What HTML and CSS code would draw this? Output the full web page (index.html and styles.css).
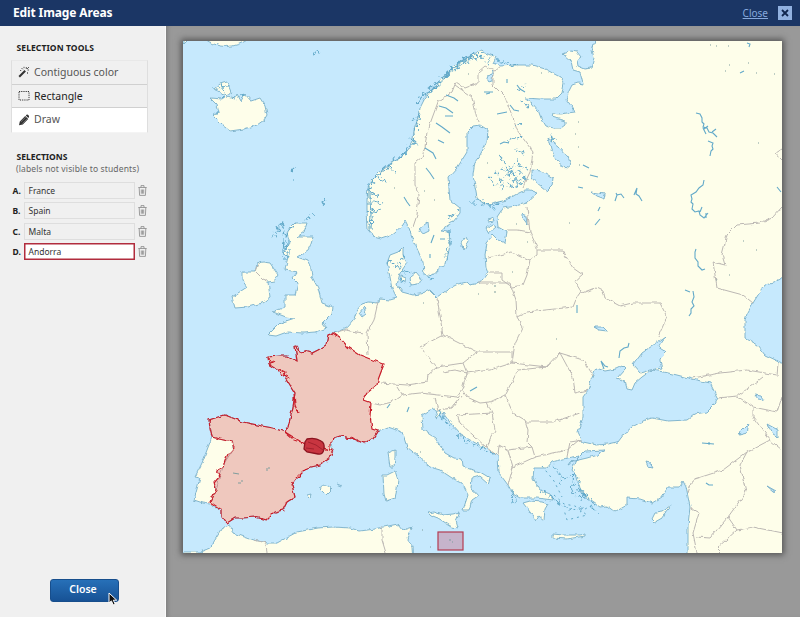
FILE: index.html
```
<!DOCTYPE html>
<html lang="en">
<head>
<meta charset="utf-8">
<title>Edit Image Areas</title>
<link rel="stylesheet" href="styles.css">
</head>
<body>
<header class="topbar">
  <h1>Edit Image Areas</h1>
  <a class="top-close" href="#">Close</a>
  <button class="x-button" aria-label="Close"><svg viewBox="0 0 14 14" width="14" height="14"><path d="M4 4l6 6M10 4l-6 6"/></svg></button>
</header>
<main class="workspace">
  <aside class="sidebar">
    <h2 class="tools-title">SELECTION TOOLS</h2>
    <div class="tools">
      <div class="tool"><svg viewBox="0 0 12 12" width="12" height="12"><path class="wand" d="M1.2 10.8L7.2 4.8"/><path class="thin" d="M8.3 1v2M11 4H9.5M3.5 2l1.3 1.3M6 .8v1.4M9.5 6.2v1.6M9 3l2-2M2 4.5h1.2"/></svg><span>Contiguous color</span></div>
      <div class="tool dark"><svg viewBox="0 0 12 12" width="12" height="12"><rect class="marquee" x="1" y="1.5" width="10" height="8.5"/></svg><span>Rectangle</span></div>
      <div class="tool active"><svg viewBox="0 0 12 12" width="12" height="12"><path class="solid" d="M1 11.3l.8-3.9L7.2 2l3 3-5.4 5.4zM7.8 1.4l.7-.6q1-.6 2 .4t.4 2l-.6.7z"/><path class="shine" d="M2.8 8l5-5M4.4 9.6l5-5"/></svg><span>Draw</span></div>
    </div>
    <h2 class="sel-title">SELECTIONS</h2>
    <p class="hint">(labels not visible to students)</p>
    <div class="rows">
      <div class="row"><b>A.</b><span class="field">France</span><svg class="trash" viewBox="0 0 9 11"><use href="#bin"/></svg></div>
      <div class="row"><b>B.</b><span class="field">Spain</span><svg class="trash" viewBox="0 0 9 11"><use href="#bin"/></svg></div>
      <div class="row"><b>C.</b><span class="field">Malta</span><svg class="trash" viewBox="0 0 9 11"><use href="#bin"/></svg></div>
      <div class="row"><b>D.</b><span class="field current">Andorra</span><svg class="trash" viewBox="0 0 9 11"><use href="#bin"/></svg></div>
    </div>
    <button class="close-button">Close<svg class="cursor" viewBox="0 0 10 14" width="10" height="14"><path d="M1 1v10l2.4-2.1 1.8 4 2-1-1.9-3.7h3.4z"/></svg></button>
  </aside>
  <section class="stage">
    <svg class="map" viewBox="183 41 599 512" width="599" height="512">
      <defs>
        <g id="bin"><path d="M.3 2.5h8.4M3 2.3V.6h3v1.7M1.2 2.8l.4 7.6h5.8l.4-7.6M3.3 4.5v4.2M4.5 4.5v4.2M5.7 4.5v4.2"/></g>
        <filter id="rough" filterUnits="userSpaceOnUse" x="170" y="30" width="625" height="535" color-interpolation-filters="sRGB">
          <feTurbulence type="fractalNoise" baseFrequency="0.2" numOctaves="1" seed="7" result="f"/>
          <feDisplacementMap in="SourceGraphic" in2="f" scale="4.5" xChannelSelector="R" yChannelSelector="G"/>
        </filter>
        <filter id="jag" filterUnits="userSpaceOnUse" x="170" y="30" width="625" height="535" color-interpolation-filters="sRGB">
          <feTurbulence type="fractalNoise" baseFrequency="0.28" numOctaves="1" seed="9" result="f"/>
          <feDisplacementMap in="SourceGraphic" in2="f" scale="11" xChannelSelector="R" yChannelSelector="G"/>
        </filter>
      </defs>
      <rect class="sea" x="183" y="41" width="599" height="512"/>
      <g filter="url(#rough)">
        <g class="land">
          <path d="M595 30L595 41 592 50 594 58 591 68 585 69 578 66 577 60 581 57 577 52 571 51 563 54 571 61 573 70 580 72 583 84 578 83 572 85 569 91 566 99 572 107 575 112 567 113 560 114 553 113 552 117 565 121 565 125 561 128 554 128 546 126 541 118 538 110 532 103 525 98 540 99 556 99 562 93 564 83 560 77 545 69 532 65 515 65 500 66 493 63 496 57 485 53 480 51 470 56 460 62 450 70 443 77 437 84 430 92 425 98 420 108 418 118 414 130 413 140 408 150 400 158 392 163 380 172 372 180 368 187 367 200 367 210 368 230 374 237 381 239 390 236 396 231 403 225 405 220 409 228 413 240 419 253 423 262 424 274 432 276 437 270 446 264 450 245 449 231 441 230 453 222 460 213 460 208 450 200 448 178 457 168 467 152 467 132 473 126 480 125 488 130 487 142 480 155 475 162 473 175 477 198 484 204 490 205 498 202 507 200 515 195 525 190 530 190 538 193 527 203 515 206 503 208 497 217 498 227 507 232 505 243 498 240 493 235 487 242 485 255 486 267 488 272 480 283 470 285 467 282 458 284 450 288 437 297 430 290 420 294 413 295 402 292 397 285 400 273 407 263 403 255 403 247 398 252 390 255 387 263 390 277 392 288 397 298 390 300 380 299 378 303 368 302 362 304 357 310 354 320 347 328 338 332 333 333 328 335 326 345 318 350 312 353 305 351 299 352 297 346 295 346 297 361 288 356 280 356 268 357 269 364 277 369 285 377 290 385 295 393 293 407 288 427 285 432 273 428 262 426 243 422 225 415 218 417 209 420 212 437 207 450 202 463 195 477 200 478 194 500 203 503 210 504 222 510 222 516 227 523 235 518 243 518 255 517 267 520 275 512 283 510 287 502 295 497 292 485 298 477 307 468 320 465 330 458 333 450 330 442 334 438 340 436 352 438 363 443 373 439 378 431 388 427 402 432 407 447 418 456 430 467 440 470 452 478 462 483 468 495 463 510 469 510 472 500 478 496 471 488 472 478 479 476 488 484 490 478 480 472 463 467 462 459 454 458 445 453 435 438 423 430 422 415 430 410 435 409 437 418 443 413 452 425 460 434 470 440 483 447 498 456 499 473 508 485 513 494 520 498 537 498 553 500 550 494 540 490 533 478 534 468 547 468 552 462 567 458 579 456 575 462 572 470 577 477 580 489 588 499 600 507 607 506 615 512 627 505 627 498 640 499 652 503 662 497 668 487 680 487 683 481 686 487 690 507 688 525 688 565H795V30z"/>
          <path d="M175 552L200 552 210 548 223 527 230 525 233 533 253 540 268 543 277 543 297 532 318 528 333 527 350 528 360 531 375 529 393 525 398 524 403 530 412 527 407 538 413 546 414 565H175z"/>
          <path d="M290 228L295 223 307 223 304 232 297 237 313 237 311 244 308 250 297 257 308 261 311 269 312 277 318 288 322 303 333 307 332 314 323 323 327 328 316 332 303 333 287 332 276 336 268 335 280 323 295 318 286 317 273 312 285 307 285 295 295 295 298 283 293 278 297 272 285 270 288 258 283 253 290 243 287 233z"/>
          <path d="M257 264L263 262 270 263 278 275 274 281 268 282 270 297 262 303 248 307 235 308 232 297 247 287 242 280 242 272 255 272z"/>
          <path d="M214 89L220 84 227 82 231 92 227 97 235 99 237 94 241 101 245 94 251 101 260 98 265 106 267 115 264 120 257 125 244 129 230 131 222 125 212 115 219 113 217 105 210 98 222 99 226 96 219 91z"/>
          <path d="M203 38Q227 55 250 38zM183 38h6l-6 6zM410 277l6-5 5 6-3 6-7 1zM401 276l5 2-1 5-4-2zM461 243l5-6 2 4-4 9zM486 228l6-4 4 3-7 6zM488 220l5-2 1 3-5 1zM388 453l7-3 0 8-1 9-4 0zM383 475l4 0 8-4 3 9-1 9-2 9-9 3-2-7zM428 513l6-1 9 3 10-1 7-2-4 9 2 7-6-1-14-9-8-3zM553 534l10 1 17 0 5-1 0 2-18 3-14-1zM652 519l3-6 7-1 10-7-7 9-3 4-7 4zM320 488l6-3 6 3-6 6zM337 484l5 2M307 495l4-1-1 4z"/>
          <path d="M523 503l7-2 12 1 6 2-3 5-1 11-5-4-3 5-6-9z"/>
        </g>
        <g class="water">
          <path d="M591 380L596 368 605 371 616 369 622 366 625 369 617 378 625 381 627 389 632 390 635 383 642 377 652 370 664 372 677 375 692 379 710 383 717 397 714 405 707 412 695 414 687 420 668 421 652 418 645 420 632 427 624 434 618 442 608 444 597 445 583 442 578 432 583 417 583 397 588 390z"/>
          <path d="M633 365L642 353 652 346 665 337 658 347 666 352 660 358 660 362 662 368 650 370 640 373z"/>
          <path d="M568 465l7-4 6-6 4-4 20-1-8 5-10 3-17 4z"/>
          <path d="M795 275L782 278 773 283 765 285 758 295 753 303 747 314 745 320 745 338 757 345 765 355 782 363H795z"/>
          <path d="M532 170l10 1 11 7-1 8-5 5-10-8-5-6zM548 138l10 8 10 11 3 8-5 4-10-9-5-10zM487 79l6-8-1 10-5 1zM419 229l9-7 1 9-6 3zM591 192l14 2-1 5-8-3zM740 432l9-9-2 10-8 2zM767 424l11 6 0 7-5-3zM646 462l4 1 3 5-5-1zM755 395l6 1 3 4-6-1zM594 327l9 0 4 4-8-1zM767 486l9 5-2 1zM359 313l5-6 2 7-4 3zM522 214l5 2 1 9-6-8z"/>
        </g>
        <g class="border">
          <path d="M500 67L495 71 485 66 478 72 478 83 465 88 456 82 452 92 438 102 427 132 425 147 422 157 415 163 415 185 419 195 417 215 413 227M455 85L472 97 478 123M493 72V85L505 97 513 118 517 130 533 152 530 172 523 187M527 207L530 232 518 230 507 230M530 232L537 247V255L530 260 512 252 488 258M530 260L527 275 523 285 512 287 502 280V273H490M478 283L510 283 516 300 517 317 523 327 515 343 512 363M537 250H562L573 268 583 275 575 282 582 293 597 287 603 290 605 298 620 306 632 303 660 303 667 317 658 337M517 317L527 312 573 307 577 297 582 290M437 298L443 335 420 347 437 367 463 363 477 352 443 335M477 352H488L512 352V363L490 370 467 373 463 363M512 363L547 367 560 353 583 360 593 375M547 367L518 370M560 353L573 377 575 393 588 390M437 367L428 375 427 382 407 385 380 383M467 373L462 390 457 397 420 393 402 395 397 387M402 395L392 402 380 405 371 403M462 390L467 397 480 403 490 402 505 395 518 370M435 398L438 410 452 408 462 395M457 415L492 413 487 402M457 415L460 423 487 448 490 439 495 430 492 413M505 395L513 413 525 420 528 430 527 442 532 447 535 457 513 467 510 457 508 450 532 447M487 448L498 456 499 445 508 450M513 467L508 485M525 422H553L580 413M535 457L567 450 579 440M583 440L570 442 567 457M693 378L720 373 747 370 777 375 778 363M718 398L737 396 750 387 763 377M737 396L753 407 777 412 782 397M753 407V417L770 440 747 452 723 470 692 480 688 493M770 440L782 450M747 452L740 465 746 492 728 517 710 538 696 537M690 508L699 513 693 533 697 553M728 517L737 530 717 548 722 553M737 530L753 527 782 533M782 207L772 218 760 223 737 225 727 235 722 255 725 265 713 262 717 288 743 295 753 303M378 302L374 320 367 333 368 355M338 332L345 330 363 333M258 264l-3 7 8 8 5 2M212 437L219 439 233 442 232 451 225 462 220 475 216 490 210 502M253 540l13 3 1 10M382 526l0 14 4 13M782 149l-6 4 4 5 2 2M467 373l-12-3-12 2"/>
        </g>
      </g>
      <g class="river">
          <path d="M696 113l4 1 2 4v4l2 2-1 3 4 1 2 4 4 1 4 4M704 129l4-3M703 128l3 6M712 132l4-3M708 141l5 2-1 3 1 3-2 2-1 5M704 180l-1 5-4 3-3 4-5 3 1 4-1 3 2 2-1 5 3 3 4-1 1 4 4 3 4-5M702 207l-2 5M706 213v5M696 249l-1 3v6l3 4v4l4 4 3-1M693 291l1 6-2 5 2 4-3 3v4l-2 3M577 305v8M619 358l1-7 4-3 4-1 1-4M608 367l-3-1-4-5 3 8M690 292l-5-2M702 443l12 1M709 442v3M706 483l3 2h4M637 188l-1 6 3 2 3 5M634 195l3-7M615 201l2-6 4-1 3 4M617 195l-1-2M600 207l-2 4M600 219l-5 6M590 175l8 2M470 391l7-4M409 407l-2 5M434 235l-3 8M578 187l5 1M583 165l6 3M740 73l4-2M747 43l3 1-1 3M777 187l4 5M390 404l-3 4"/>
          <path d="M446 95l8 3 4 3M439 106l7 2 7 5M445 116h8M436 123l6 4 8 6M438 140l6 3M425 148l8 5 3 6M426 168l4 5 4 6M404 197l3 5 3 4M500 144l4-2 5 1M497 114l10-2M510 105l4 5 5 1M517 85l3 4 5 3M507 79v4M430 254v4M440 239h5M484 92h9M486 94l4-1"/>
      </g>
      <g class="fjords" filter="url(#jag)">
        <path d="M485 56L470 60 457 68 445 78 435 88 426 98M483 51L465 60 450 71 440 80 426 92 417 103M480 54l-15 4-15 13-10 12-14 12M478 58l-3-6M492 55l-5 9M420 110L416 126 413 141 403 154M408 151L390 164 374 178 370 190M369 184V202L370 215 369 227M371 186V202L372 215 371 230M369 190l10 7M370 200l12 4M369 212l12-3M388 166l8 8M378 178l10 4M413 118l6 7M410 138l7 6M497 60l20 6"/>
        <path class="lakes" d="M500 156l6 10 4 12 8-9 7 8-4 7-10 3M503 178l9-11 7-9M513 182l12-6M496 186l-7-8M500 190l5-7 8 3M517 165l10 4M525 153l-10-3M502 168l12 6 4 12M495 170l8 15M518 90l8-5M520 100l10 8M523 123l-10 4M507 140l14-3M551 137l8 6M283 236l10-10M283 244l6 14M285 250l3-9M288 240v18M284 240v20M272 238l8-12M275 234l8-10M280 225l5-4M305 220l8-6M476 199l16 6 12-4M483 204l12 4M469 203h6M450 230l-1 14-3 15M449 217l10-6M432 278l-9-3M403 256l-5 10M395 266l15 8M399 279l12 5M388 260l8 6M436 409l14 15M455 435l18 9 22 11M440 415l12 14M552 465l8 9 2 12M563 478l11-3-3 16 9 7M555 500l14 9 14-1M541 491l15 9M512 488l3 13-2 3M573 470l6 10 1 13 14 9M591 506l7 7M323 204l3-7M214 88l14-1M222 84l3 12M212 114h8M230 98l13-3M291 170l2 2M294 168h2M293 179v2M313 54l6-3"/>
      </g>
      <g class="specks">
        <path d="M710 45h1M716 46h1M728 46h1M748 63h1M729 65h1M725 71h1M756 73h1M774 74h1M758 143h1M743 241h1M756 250h1M729 275h1M716 280h1M578 147h1M579 165h1M575 134h1M569 223h1M494 286h2M494 292h2M478 294h1M423 303h1M556 339h1M512 272h1M527 242h1M516 224h1M487 163h1M424 191h1M434 200h1M394 188h1M541 73h1M468 74h1M578 122h1M422 530h1M430 547h1M420 452h1"/>
        <path class="islands" d="M554 495l10 9 11 2 12 9-20 5-3-10M542 466l12 15 8 16M580 480l-9 9 14 2-4 10M592 505l-12 7"/>
      </g>
      <g filter="url(#rough)" class="selected">
        <path d="M333 333L328 335 326 345 318 350 312 353 305 351 299 352 297 346 295 346 297 361 288 356 280 356 268 357 269 364 277 369 285 377 290 385 295 393 293 407 288 427 285 432 303 443 330 450 330 442 334 438 340 436 352 438 363 443 373 439 378 431 372 429 370 416 371 403 363 400 367 393 377 385 378 380 384 364 370 359 360 355 348 347 340 338z"/>
        <path d="M225 415L243 422 262 426 273 428 285 432 294 440 303 443 330 450 333 450 330 458 320 465 307 468 298 477 292 485 295 497 287 502 283 510 275 512 267 520 255 517 243 518 235 518 227 523 222 516 222 510 210 502 216 490 214 482 220 475 217 470 223 467 225 460 228 454 234 448 232 442 219 439 212 437 210 429 209 420 218 417z"/>
        <path class="detail" d="M294 394l1 11 3 8M268 357l3 4-2 3 5-3M277 368l8 4-1 3 6 3M345 438l9 1-2-2"/>
      </g>
      <g class="specks"><path d="M233 473l6 1M238 483h3M241 481h2M267 468v3M269 467v2"/></g>
      <path class="andorra" d="M307 439q8-2 14 2 4 2 3 8t-6 5l-11-2-3-3 1-7z"/>
      <path class="andorra-line" d="M308 442l8 3 7 5M306 448l8 1"/>
      <rect class="malta" x="438" y="532" width="25" height="18"/>
      <path class="specks" d="M449 540h2M452 542h1"/>
    </svg>
  </section>
</main>
</body>
</html>
```
FILE: styles.css
```
* { box-sizing: border-box; }
body { margin: 0; width: 800px; height: 617px; overflow: hidden; display: flex; flex-direction: column; font-family: "Noto Sans", "Open Sans", sans-serif; color: #222; }
.topbar { height: 26px; flex: none; background: #1b3665; color: #fff; display: flex; align-items: center; padding: 0 8px 0 13px; }
h1 { margin: 0; font-size: 12px; letter-spacing: -.12px; font-weight: 700; flex: 1; line-height: 26px; }
.top-close { color: #86a8dc; font-size: 10px; margin-right: 10px; }
.x-button { width: 14px; height: 14px; border: 0; padding: 0; background: #91b1e0; display: flex; }
.x-button path { stroke: #10274f; stroke-width: 1.8; }
.workspace { flex: 1; display: flex; min-height: 0; }
.sidebar { width: 166px; background: #f0f0f0; border-right: 1px solid #fafafa; display: flex; flex-direction: column; flex: none; }
h2 { margin: 0 0 0 16.5px; font-size: 8.5px; line-height: 12px; font-weight: 700; letter-spacing: .1px; }
.tools-title { margin-top: 16px; }
.tools { margin: 6px 17px 0 11px; border: 1px solid #dedede; border-top-color: #e8e8e8; border-bottom-color: #f4f4f4; }
.tool { height: 23.5px; display: flex; align-items: center; padding-left: 6px; gap: 4px; font-size: 10.5px; color: #555; border-bottom: 1px solid #d0d0d0; }
.tool.dark { color: #222; }
.tool.active { background: #fff; border-bottom: 0; }
.tool.active span { position: relative; top: -.5px; }
.tool svg { fill: none; stroke: #333; }
.wand { stroke-width: 2; }
.thin { stroke-width: .8; }
.marquee { stroke-width: 1; stroke-dasharray: 1.2 1; }
.solid { fill: #333; stroke: none; }
.shine { stroke: #aaa; stroke-width: .5; }
.sel-title { margin-top: 18px; letter-spacing: 0; }
.hint { margin: 0 0 0 16px; font-size: 8.5px; letter-spacing: .14px; line-height: 12px; color: #666; }
.rows { display: flex; flex-direction: column; gap: 3.5px; margin: 7px 0 0 12.5px; }
.row { height: 17px; display: flex; align-items: center; font-size: 8.5px; }
.row b { width: 11px; flex: none; }
.field { width: 111px; height: 17px; line-height: 15px; border: 1px solid #dedede; padding-left: 4px; color: #333; }
.field.current { background: #fff; border: 1px solid #b12c3d; box-shadow: inset 0 0 0 .5px #b12c3d; line-height: 16px; }
.trash { width: 9px; height: 11px; margin-left: 3px; fill: none; stroke: #888; stroke-width: .8; }
.close-button { position: relative; width: 69px; height: 23px; margin: auto 0 15.5px 49.5px; border: 1px solid #174e8c; border-radius: 3px; padding: 0 2px 2px 0; background: linear-gradient(#2770b8, #175295); color: #fff; font: 600 10.5px "Noto Sans", sans-serif; }
.cursor { position: absolute; left: 57px; top: 12px; overflow: visible; fill: #111; stroke: #fff; stroke-width: 1; }
.stage { flex: 1; background: #999; padding: 15px 0 0 17px; box-shadow: inset 4px 0 5px -3px #777; }
.map { display: block; overflow: hidden; box-shadow: 0 0 6px 2px #555; }
.sea { fill: #c6e9fd; }
.land path { fill: #fefeea; stroke: #78afc8; stroke-width: .9; }
.water path { fill: #c6e9fd; stroke: #78afc8; stroke-width: .9; }
.border path { fill: none; stroke: #bcb8b4; stroke-width: 1; }
.river path { fill: none; stroke: #62a9c9; stroke-width: 1.1; }
.fjords path { fill: none; stroke: #62a9c9; stroke-width: 1.1; }
.fjords .lakes { stroke-width: 1.1; stroke-dasharray: 7 2; }
.specks { fill: none; stroke: #7f9d9d; stroke-width: 1; }
.specks .islands { stroke: #62a9c9; stroke-dasharray: 2 4; }
.selected path { fill: #c83c4b; fill-opacity: .28; stroke: #c81e2b; stroke-width: 1.2; }
.selected .detail { fill: none; }
.andorra { fill: #c83540; stroke: #8b1420; stroke-width: 1.3; }
.andorra-line { fill: none; stroke: #981c28; stroke-width: .8; }
.malta { fill: #c6b4cb; stroke: #b43c52; stroke-width: 1.2; }
```
